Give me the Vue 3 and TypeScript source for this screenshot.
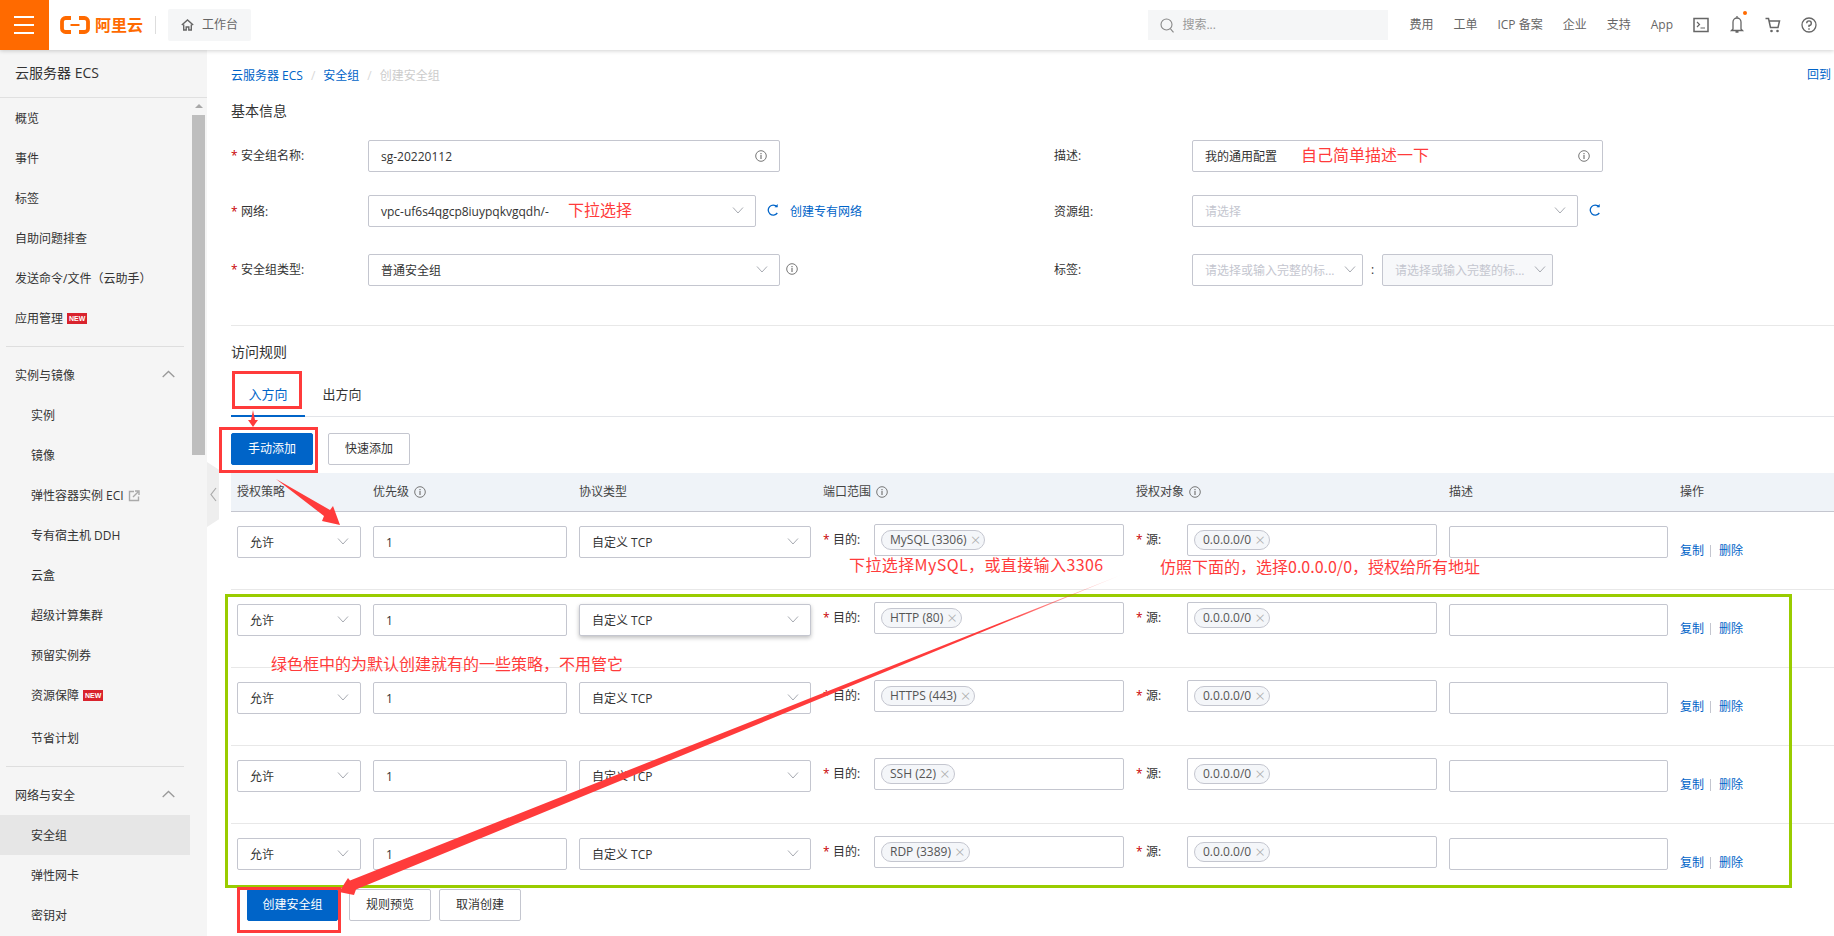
<script setup lang="ts">
interface NavItem { label: string; kind?: 'group' | 'sub' | 'line'; badge?: boolean; ext?: boolean; active?: boolean; spaced?: boolean }
const nav: NavItem[] = [
  { label: '概览' }, { label: '事件' }, { label: '标签' }, { label: '自助问题排查' }, { label: '发送命令/文件\uFF08云助手\uFF09' },
  { label: '应用管理', badge: true }, { label: '', kind: 'line' },
  { label: '实例与镜像', kind: 'group' }, { label: '实例', kind: 'sub' }, { label: '镜像', kind: 'sub' },
  { label: '弹性容器实例 ECI', kind: 'sub', ext: true }, { label: '专有宿主机 DDH', kind: 'sub' }, { label: '云盒', kind: 'sub' },
  { label: '超级计算集群', kind: 'sub' }, { label: '预留实例券', kind: 'sub' }, { label: '资源保障', kind: 'sub', badge: true },
  { label: '节省计划', kind: 'sub', spaced: true }, { label: '', kind: 'line' },
  { label: '网络与安全', kind: 'group' }, { label: '安全组', kind: 'sub', active: true }, { label: '弹性网卡', kind: 'sub' }, { label: '密钥对', kind: 'sub' },
]
const topLinks = ['费用', '工单', 'ICP 备案', '企业', '支持', 'App']
const rules = [
  { port: 'MySQL (3306)', hover: false, last: false },
  { port: 'HTTP (80)', hover: true, last: false },
  { port: 'HTTPS (443)', hover: false, last: false },
  { port: 'SSH (22)', hover: false, last: false },
  { port: 'RDP (3389)', hover: false, last: true },
]
</script>

<template>
  <div class="page">
    <svg class="defs" width="0" height="0" aria-hidden="true">
      <symbol id="chev" viewBox="0 0 12 12"><path d="M1 3.500 6 9l5-5.500" fill="none" stroke="#a8abb2" stroke-width="1"/></symbol>
      <symbol id="info" viewBox="0 0 12 12"><circle cx="6" cy="6" r="5.300" fill="none" stroke="#777" stroke-width="1"/><path d="M6 5v4M6 3v1.200" stroke="#777" stroke-width="1.200"/></symbol>
      <symbol id="refresh" viewBox="0 0 12 12"><path d="M10 2.800A5 5 0 1 0 10.300 9" fill="none" stroke="#0064c8" stroke-width="1.300"/><path d="M7.500 3.300h3.200V0z" fill="#0064c8"/></symbol>
    </svg>

    <header class="topbar">
      <div class="burger"><i></i><i></i><i></i></div>
      <div class="logo">
        <svg width="30" height="18" viewBox="0 0 30 18"><path d="M11 2H5.500A3.500 3.500 0 0 0 2 5.500v7A3.500 3.500 0 0 0 5.500 16H11M19 2h5.500A3.500 3.500 0 0 1 28 5.500v7a3.500 3.500 0 0 1-3.500 3.500H19" fill="none" stroke="#ff6a00" stroke-width="3.800"/><path d="M10.500 9h9" stroke="#ff6a00" stroke-width="2"/></svg>
        <span class="logo-text">阿里云</span>
      </div>
      <span class="vline"></span>
      <div class="workbench">
        <svg width="13" height="12" viewBox="0 0 13 12"><path d="M.8 6 6.500 1l5.700 5M2.700 5.500V11h2.500V8h2.600v3h2.500V5.500" fill="none" stroke="#666" stroke-width="1.400"/></svg>
        <span>工作台</span>
      </div>
      <div class="search">
        <svg width="14" height="15" viewBox="0 0 14 15"><circle cx="6.500" cy="6.500" r="5.500" fill="none" stroke="#888" stroke-width="1.100"/><path d="m10.500 10.800 3 3.500" stroke="#888" stroke-width="1.100"/></svg>
        <span>搜索...</span>
      </div>
      <nav class="toplinks"><span v-for="t in topLinks" :key="t">{{ t }}</span></nav>
      <div class="topicons">
        <svg width="16" height="16" viewBox="0 0 16 16"><rect x="1" y="1.500" width="14" height="13" fill="none" stroke="#666" stroke-width="1.500"/><path d="m4 5 2.500 2.500L4 10M7.500 11H12" fill="none" stroke="#666" stroke-width="1.200"/></svg>
        <span class="bell">
          <svg width="16" height="18" viewBox="0 0 16 18"><path d="M4 14V7a4 4 0 0 1 8 0v7l1.500 1.500h-11zM6.500 17h3M8 1v2" fill="none" stroke="#666" stroke-width="1.300"/></svg>
          <i class="dot"></i>
        </span>
        <svg width="16" height="16" viewBox="0 0 16 16"><path d="M.5 1.500h3l2 9h7.500l1.500-6.500H4.300" fill="none" stroke="#666" stroke-width="1.500"/><circle cx="6.500" cy="14" r="1.300" fill="#666"/><circle cx="12.500" cy="14" r="1.300" fill="#666"/></svg>
        <svg width="16" height="16" viewBox="0 0 16 16"><circle cx="8" cy="8" r="7" fill="none" stroke="#666" stroke-width="1.300"/><path d="M5.700 6.200A2.300 2.300 0 1 1 8 8.500V10M8 11.200v1.500" fill="none" stroke="#666" stroke-width="1.400"/></svg>
      </div>
    </header>

    <div class="body">
      <aside class="sidebar">
        <div class="side-title">云服务器 ECS</div>
        <div class="side-body">
          <ul class="nav">
            <template v-for="(n, i) in nav" :key="i">
              <li v-if="n.kind === 'line'" class="nav-line"></li>
              <li v-else class="nav-item" :class="[n.kind, { active: n.active, spaced: n.spaced }]">
                <span>{{ n.label }}</span>
                <em v-if="n.badge" class="new">NEW</em>
                <svg v-if="n.ext" class="ext" width="12" height="12" viewBox="0 0 12 12"><path d="M6 1.500H1.500v9h9V6.500" fill="none" stroke="#aaa" stroke-width="1.400"/><path d="M5 7 10 2M7 1h4v4" fill="none" stroke="#aaa" stroke-width="1.400"/></svg>
                <svg v-if="n.kind === 'group'" class="up" width="13" height="8" viewBox="0 0 13 8"><path d="m.7 7 5.800-5.500L12.300 7" fill="none" stroke="#999" stroke-width="1.300"/></svg>
              </li>
            </template>
          </ul>
          <div class="scrollbar">
            <div class="scroll-up"></div>
            <div class="scroll-thumb"></div>
          </div>
        </div>
      </aside>

      <main class="main">
        <div class="crumbs">
          <a>云服务器 ECS</a><i>/</i><a>安全组</a><i>/</i><span>创建安全组</span>
          <a class="back">回到</a>
        </div>
        <h3 class="section first">基本信息</h3>

        <div class="form">
          <div class="form-row">
            <div class="fcol">
              <label class="flabel"><b>*</b>安全组名称:</label>
              <div class="box w412">sg-20220112<svg class="in-icon"><use href="#info"/></svg></div>
            </div>
            <div class="fcol">
              <label class="flabel right">描述:</label>
              <div class="box w411">我的通用配置<svg class="in-icon"><use href="#info"/></svg></div>
            </div>
          </div>
          <div class="form-row r2">
            <div class="fcol">
              <label class="flabel"><b>*</b>网络:</label>
              <div class="box w388">vpc-uf6s4qgcp8iuypqkvgqdh/-<svg class="chev"><use href="#chev"/></svg></div>
              <svg class="side-icon first-r"><use href="#refresh"/></svg>
              <a class="make">创建专有网络</a>
            </div>
            <div class="fcol">
              <label class="flabel right">资源组:</label>
              <div class="box w386 ph">请选择<svg class="chev"><use href="#chev"/></svg></div>
              <svg class="side-icon second-r"><use href="#refresh"/></svg>
            </div>
          </div>
          <div class="form-row r3">
            <div class="fcol">
              <label class="flabel"><b>*</b>安全组类型:</label>
              <div class="box w412">普通安全组<svg class="chev"><use href="#chev"/></svg></div>
              <svg class="side-icon info-r"><use href="#info"/></svg>
            </div>
            <div class="fcol">
              <label class="flabel right">标签:</label>
              <div class="box w171 ph tight">请选择或输入完整的标...<svg class="chev"><use href="#chev"/></svg></div>
              <span class="colon">:</span>
              <div class="box w171 ph tight off">请选择或输入完整的标...<svg class="chev"><use href="#chev"/></svg></div>
            </div>
          </div>
        </div>

        <div class="hr"></div>
        <h3 class="section rules-title">访问规则</h3>

        <div class="tabs">
          <div class="tab on">入方向</div>
          <div class="tab">出方向</div>
        </div>

        <div class="btns">
          <button class="btn primary">手动添加</button>
          <button class="btn">快速添加</button>
        </div>

        <div class="grid thead">
          <span>授权策略</span>
          <span>优先级<svg class="th-info"><use href="#info"/></svg></span>
          <span>协议类型</span>
          <span>端口范围<svg class="th-info"><use href="#info"/></svg></span>
          <span>授权对象<svg class="th-info"><use href="#info"/></svg></span>
          <span>描述</span>
          <span>操作</span>
        </div>

        <div v-for="r in rules" :key="r.port" class="grid trow" :class="{ last: r.last }">
          <div class="box">允许<svg class="chev"><use href="#chev"/></svg></div>
          <div class="box">1</div>
          <div class="box" :class="{ hover: r.hover }">自定义 TCP<svg class="chev"><use href="#chev"/></svg></div>
          <div class="pair">
            <label class="plabel"><b>*</b>目的:</label>
            <div class="box tagbox"><span class="tag">{{ r.port }}<i>×</i></span></div>
          </div>
          <div class="pair">
            <label class="plabel"><b>*</b>源:</label>
            <div class="box tagbox"><span class="tag">0.0.0.0/0<i>×</i></span></div>
          </div>
          <div class="box"></div>
          <div class="ops"><a>复制</a><i></i><a>删除</a></div>
        </div>

        <div class="btns foot">
          <button class="btn primary wide">创建安全组</button>
          <button class="btn">规则预览</button>
          <button class="btn">取消创建</button>
        </div>
      </main>
    </div>

    <div class="handle">
      <svg width="7" height="15" viewBox="0 0 7 15"><path d="M6 1 1 7.500 6 14" fill="none" stroke="#aaa" stroke-width="1.200"/></svg>
    </div>

    <!-- annotations drawn over the screenshot -->
    <div class="mark green"></div>
    <div class="mark red r-tab"></div>
    <div class="mark red r-add"></div>
    <div class="mark red r-create"></div>
    <span class="note n1">自己简单描述一下</span>
    <span class="note n2">下拉选择</span>
    <span class="note n3">下拉选择MySQL&#xFF0C;或直接输入3306</span>
    <span class="note n4">仿照下面的&#xFF0C;选择0.0.0.0/0&#xFF0C;授权给所有地址</span>
    <span class="note n5">绿色框中的为默认创建就有的一些策略&#xFF0C;不用管它</span>
    <svg class="arrows" width="1834" height="936" viewBox="0 0 1834 936">
      <defs>
        <linearGradient id="fade" gradientUnits="userSpaceOnUse" x1="1121" y1="575" x2="1000" y2="624">
          <stop offset="0" stop-color="#ff3b3b" stop-opacity="0.100"/>
          <stop offset="1" stop-color="#ff3b3b"/>
        </linearGradient>
      </defs>
      <path d="M1121 575 356 889.500 354 895 339 892 348 878 350 880.500z" fill="url(#fade)"/>
      <path d="M276 479 330 510 333 506 340 525 322 521 324 516z" fill="#ff3b3b"/>
      <path d="M253 410 255 420 258 420 253 427 248 420 251 420z" fill="#ff3b3b"/>
    </svg>
  </div>
</template>

<style>
html, body { margin: 0; overflow: hidden; }
</style>

<style scoped>
.page { position: relative; width: 1834px; height: 936px; overflow: hidden; background: #fff; color: #333; font: 12px/16px "Open Sans", "Noto Sans CJK SC", sans-serif; }
.defs { position: absolute; }
ul { list-style: none; margin: 0; padding: 0; }
h3 { margin: 0; font-weight: 400; font-size: 14px; line-height: 20px; color: #333; }
a { color: #0064c8; }

.topbar { position: relative; z-index: 3; display: flex; align-items: center; height: 50px; background: #fff; box-shadow: 0 1px 4px rgba(0,0,0,.18); }
.burger { display: flex; flex-direction: column; justify-content: center; gap: 6px; width: 49px; height: 50px; padding-left: 14px; box-sizing: border-box; background: #ff6a00; }
.burger i { display: block; width: 20px; height: 2px; background: #fff; }
.logo { display: flex; align-items: center; gap: 5px; margin-left: 11px; }
.logo-text { font-size: 16px; font-weight: 700; color: #ff6a00; line-height: 20px; }
.vline { width: 1px; height: 18px; margin-left: 12px; background: #ddd; }
.workbench { display: flex; align-items: center; gap: 8px; width: 83px; height: 32px; margin-left: 12px; padding-left: 13px; box-sizing: border-box; background: #f5f6f7; border-radius: 2px; color: #666; }
.search { display: flex; align-items: center; gap: 8px; width: 240px; height: 30px; margin-left: auto; padding-left: 12px; box-sizing: border-box; background: #f5f6f7; color: #999; }
.toplinks { display: flex; gap: 20px; margin-left: 21px; color: #666; }
.topicons { display: flex; gap: 20px; align-items: center; margin-left: 20px; margin-right: 17px; }
.bell { position: relative; display: block; width: 16px; height: 18px; margin-top: -2px; }
.dot { position: absolute; top: -4px; right: -2px; width: 4px; height: 4px; border-radius: 50%; background: #ff6a00; }

.body { display: flex; height: 886px; }
.sidebar { width: 207px; flex: none; background: #f5f5f5; overflow: hidden; }
.side-title { height: 47px; line-height: 46px; padding-left: 15px; font-size: 14px; color: #333; border-bottom: 1px solid #e0e0e0; }
.side-body { display: flex; }
.nav { width: 190px; flex: none; margin-right: 2px; }
.nav-item { display: flex; align-items: center; position: relative; height: 40px; padding: 1px 0 0 15px; box-sizing: border-box; }
.nav-item.sub { padding-left: 31px; }
.nav-item.active { background: #e6e6e6; }
.nav-item.spaced { margin-top: 3px; }
.nav-line { height: 1px; margin: 8px 6px; background: #dedede; }
.new { margin-left: 4px; padding: 0 2px; height: 11px; line-height: 11px; background: #d9232d; color: #fff; font: 700 7px/11px "Liberation Sans", sans-serif; }
.ext { margin-left: 4px; }
.up { position: absolute; right: 15px; top: 15px; }
.scrollbar { width: 13px; }
.scroll-up { height: 17px; position: relative; }
.scroll-up::after { content: ""; position: absolute; left: 3px; top: 6px; border: 4px solid transparent; border-top: 0; border-bottom: 4px solid #a8a8a8; }
.scroll-thumb { height: 340px; background: #bebebe; }

.main { flex: 1; min-width: 0; padding-left: 24px; }
.crumbs { position: relative; display: flex; margin-top: 18px; color: #ccc; }
.crumbs i { margin: 0 8px; font-style: normal; color: #d8d8d8; }
.back { position: absolute; left: 1576px; top: -1px; white-space: nowrap; }
.section.first { margin-top: 17px; }
.form { margin-top: 19px; }
.form-row { display: flex; height: 32px; }
.form-row.r2 { margin-top: 23px; }
.form-row.r3 { margin-top: 27px; }
.fcol { display: flex; align-items: center; width: 823px; flex: none; }
.flabel { width: 137px; flex: none; white-space: nowrap; }
.r2 .flabel { padding-top: 2px; }
.flabel.right { width: 138px; }
.flabel b, .plabel b { display: inline-block; width: 10px; font-weight: 400; color: #c80000; }
.box { position: relative; box-sizing: border-box; height: 32px; line-height: 31px; padding-left: 12px; border: 1px solid #c4c6cf; border-radius: 2px; background: #fff; white-space: nowrap; }
.w412 { width: 412px; }
.w411 { width: 411px; }
.w388 { width: 388px; }
.w386 { width: 386px; }
.w171 { width: 171px; }
.ph { color: #c4c6cf; }
.off { background: #f7f8fa; }
.chev { position: absolute; right: 11px; top: 8px; width: 12px; height: 12px; }
.in-icon { position: absolute; right: 12px; top: 9px; width: 12px; height: 12px; }
.tight .chev { right: 6px; }
.side-icon { width: 12px; height: 12px; flex: none; margin-top: -2px; }
.first-r { margin-left: 11px; }
.second-r { margin-left: 11px; }
.info-r { margin-left: 6px; }
.make { margin-left: 11px; padding-top: 2px; }
.colon { width: 19px; text-align: center; }
.hr { height: 1px; margin-top: 39px; background: #e8e8e8; }
.rules-title { margin-top: 16px; }
.tabs { display: flex; height: 45px; margin-top: 10px; box-sizing: border-box; border-bottom: 1px solid #e3e5e9; }
.tab { width: 74px; height: 45px; line-height: 44px; box-sizing: border-box; text-align: center; font-size: 13px; }
.tab.on { color: #0064c8; border-bottom: 2px solid #0064c8; }
.btns { display: flex; gap: 15px; margin-top: 16px; }
.btn { width: 82px; height: 32px; padding: 0; box-sizing: border-box; font: inherit; color: #333; background: #fff; border: 1px solid #c4c6cf; border-radius: 2px; }
.btn.primary { color: #fff; background: #0064c8; border-color: #0064c8; }
.grid { display: grid; grid-template-columns: 124px 194px 232px 301px 301px 219px 1fr; column-gap: 12px; padding-left: 6px; }
.thead { align-items: center; height: 39px; margin-top: 8px; box-sizing: border-box; background: #eff3f8; border-bottom: 1px solid #c4c6cf; color: #444; }
.thead span { display: flex; align-items: center; }
.th-info { width: 12px; height: 12px; margin-left: 5px; }
.trow { height: 78px; box-sizing: border-box; padding-top: 14px; border-bottom: 1px solid #e8e8e8; align-items: start; }
.trow.last { height: 65px; border-bottom: 0; }
.hover { box-shadow: 0 2px 4px rgba(0,0,0,.25); }
.pair { display: flex; align-items: flex-start; margin-top: -2px; }
.plabel { width: 51px; flex: none; line-height: 31px; white-space: nowrap; }
.tagbox { flex: 1; padding-left: 6px; }
.tag { display: inline-flex; align-items: center; height: 20px; line-height: 18px; margin-top: 5px; padding: 0 4px 0 8px; box-sizing: border-box; border: 1px solid #c4c6cf; border-radius: 10px; background: #f4f6f9; color: #555; vertical-align: top; }
.tag i { margin-left: 4px; font-style: normal; font-size: 17px; font-weight: 300; color: #aaa; }
.ops { display: flex; align-items: center; margin-top: 17px; }
.ops i { width: 1px; height: 12px; margin: 0 8px 0 6px; background: #c4c6cf; }
.foot { gap: 8px; margin: 0 0 0 16px; }
.btn.wide { width: 91px; margin-right: 3px; }

.handle { position: absolute; z-index: 2; left: 207px; top: 462px; display: flex; align-items: center; justify-content: center; width: 12px; height: 65px; background: #eee; clip-path: polygon(0 0, 100% 12%, 100% 88%, 0 100%); }
.mark { position: absolute; z-index: 4; box-sizing: border-box; pointer-events: none; }
.green { left: 225px; top: 594px; width: 1567px; height: 294px; border: 3px solid #99cc00; }
.red { border: 3px solid #ff3b3b; }
.r-tab { left: 232px; top: 371px; width: 70px; height: 38px; }
.r-add { left: 219px; top: 427px; width: 99px; height: 46px; }
.r-create { left: 237px; top: 887px; width: 104px; height: 46px; }
.note { position: absolute; z-index: 5; font: 400 16px/22px "Noto Sans CJK SC", sans-serif; color: #ff3b3b; white-space: nowrap; }
.n1 { left: 1301px; top: 143px; }
.n2 { left: 568px; top: 198px; }
.n3 { left: 849px; top: 553px; letter-spacing: .4px; }
.n4 { left: 1160px; top: 555px; }
.n5 { left: 271px; top: 652px; }
.arrows { position: absolute; z-index: 6; left: 0; top: 0; pointer-events: none; }
</style>
